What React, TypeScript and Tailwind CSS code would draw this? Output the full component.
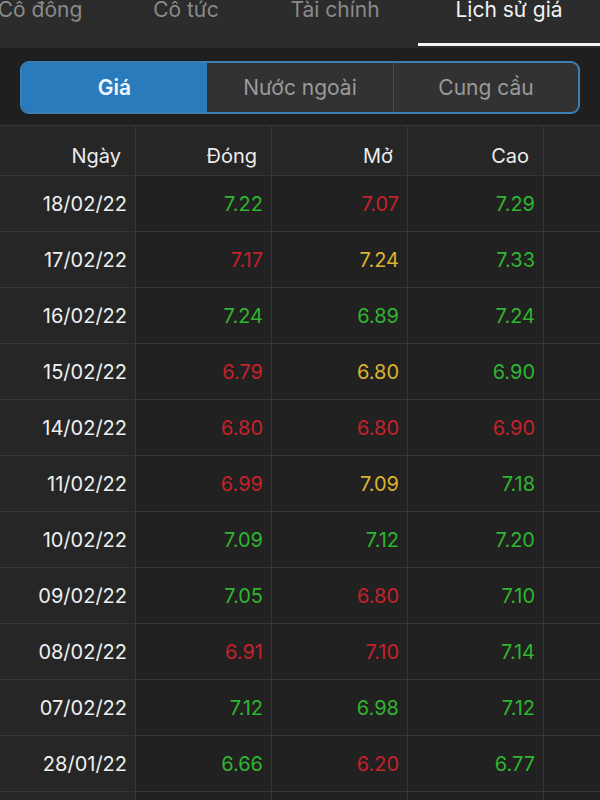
import React from "react";

type C = "g" | "r" | "y";
const rows: [string, [string, C], [string, C], [string, C]][] = [
  ["18/02/22", ["7.22", "g"], ["7.07", "r"], ["7.29", "g"]],
  ["17/02/22", ["7.17", "r"], ["7.24", "y"], ["7.33", "g"]],
  ["16/02/22", ["7.24", "g"], ["6.89", "g"], ["7.24", "g"]],
  ["15/02/22", ["6.79", "r"], ["6.80", "y"], ["6.90", "g"]],
  ["14/02/22", ["6.80", "r"], ["6.80", "r"], ["6.90", "r"]],
  ["11/02/22", ["6.99", "r"], ["7.09", "y"], ["7.18", "g"]],
  ["10/02/22", ["7.09", "g"], ["7.12", "g"], ["7.20", "g"]],
  ["09/02/22", ["7.05", "g"], ["6.80", "r"], ["7.10", "g"]],
  ["08/02/22", ["6.91", "r"], ["7.10", "r"], ["7.14", "g"]],
  ["07/02/22", ["7.12", "g"], ["6.98", "g"], ["7.12", "g"]],
  ["28/01/22", ["6.66", "g"], ["6.20", "r"], ["6.77", "g"]],
];

const colorCls: Record<C, string> = {
  g: "text-[#2fb52f]",
  r: "text-[#c4222a]",
  y: "text-[#dcb32e]",
};

function Cell({ v }: { v: [string, C] }) {
  return (
    <div className={`h-[56px] bg-[#212121] border-r border-b border-[#363636] flex items-center justify-end pr-[8px] text-[20px] leading-[24px] ${colorCls[v[1]]}`}>
      {v[0]}
    </div>
  );
}

export default function App() {
  return (
    <div
      className="w-[600px] h-[800px] overflow-hidden bg-[#212121]"
      style={{ fontFamily: "Inter, 'Noto Sans', sans-serif" }}
    >
      {/* top tabs */}
      <div className="h-[48px] bg-[#2c2c2c] flex overflow-hidden">
        <div className="w-[160px] shrink-0 -ml-[40px] flex justify-center">
          <span className="-mt-[2px] text-[21px] leading-[24px] text-[#8a8a8a]">Cổ đông</span>
        </div>
        <div className="w-[132px] shrink-0 flex justify-center">
          <span className="-mt-[2px] text-[21px] leading-[24px] text-[#8a8a8a]">Cổ tức</span>
        </div>
        <div className="w-[166px] shrink-0 flex justify-center">
          <span className="-mt-[2px] text-[21px] leading-[24px] text-[#8a8a8a]">Tài chính</span>
        </div>
        <div className="w-[182px] shrink-0 flex flex-col items-center justify-between">
          <span className="-mt-[2px] text-[21px] leading-[24px] text-[#f2f2f2]">Lịch sử giá</span>
          <div className="w-full h-[3px] bg-[#f5f5f5] mb-[2px]" />
        </div>
      </div>

      {/* segmented area */}
      <div className="h-[77px] bg-[#1f1f1f] px-[20px] pt-[13px]">
        <div className="h-[53px] rounded-[9px] border-2 border-[#3a80b6] bg-[#323232] flex overflow-hidden">
          <div className="w-[185px] bg-[#2a7bbb] flex items-center justify-center text-[21px] font-semibold text-[#eef5fb]">
            Giá
          </div>
          <div className="w-[187px] border-r border-[#4a4a4a] flex items-center justify-center text-[21px] text-[#9a9a9a]">
            Nước ngoài
          </div>
          <div className="flex-1 flex items-center justify-center text-[21px] text-[#9a9a9a]">
            Cung cầu
          </div>
        </div>
      </div>

      {/* table */}
      <div className="grid grid-cols-[136px_136px_136px_136px_56px] border-t border-[#363636]">
        {["Ngày", "Đóng", "Mở", "Cao"].map((h) => (
          <div
            key={h}
            className="h-[50px] bg-[#262626] border-r border-b border-[#363636] flex items-start justify-end pr-[14px] pt-[18px] text-[20px] leading-[24px] text-[#ececec]"
          >
            {h}
          </div>
        ))}
        <div className="h-[50px] bg-[#262626] border-b border-[#363636]" />
        {rows.map((r) => (
          <React.Fragment key={r[0]}>
            <div className="h-[56px] bg-[#262626] border-r border-b border-[#363636] flex items-center justify-end pr-[8px] text-[20px] leading-[24px] text-[#f0f0f0]">
              {r[0]}
            </div>
            <Cell v={r[1]} />
            <Cell v={r[2]} />
            <Cell v={r[3]} />
            <div className="h-[56px] bg-[#212121] border-b border-[#363636]" />
          </React.Fragment>
        ))}
        <div className="h-[56px] bg-[#262626] border-r border-[#363636]" />
        <div className="h-[56px] bg-[#212121] border-r border-[#363636]" />
        <div className="h-[56px] bg-[#212121] border-r border-[#363636]" />
        <div className="h-[56px] bg-[#212121] border-r border-[#363636]" />
        <div className="h-[56px] bg-[#212121]" />
      </div>
    </div>
  );
}
